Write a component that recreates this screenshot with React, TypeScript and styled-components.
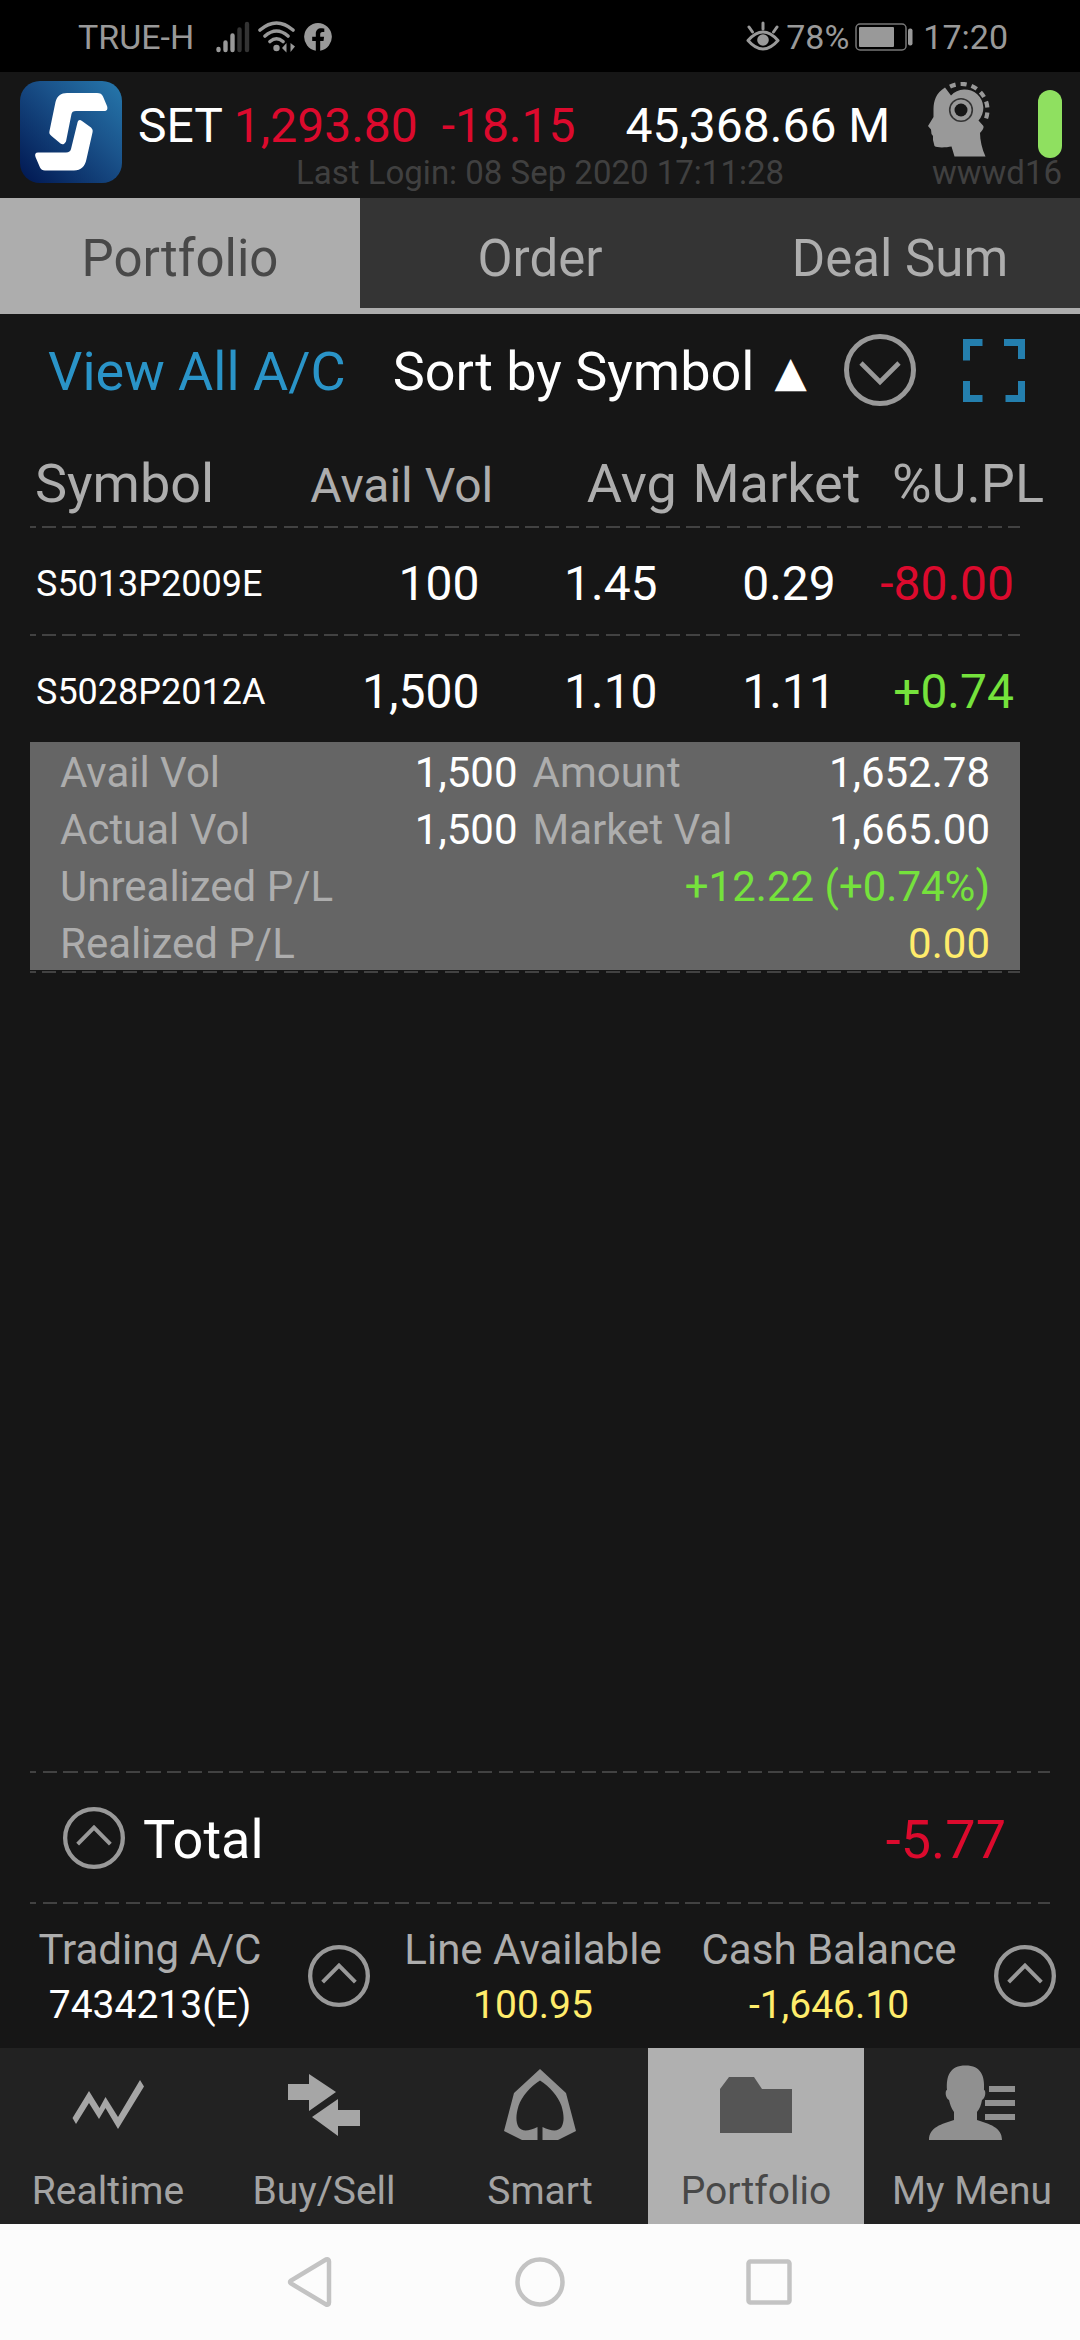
import React from "react";
import styled, { createGlobalStyle, css } from "styled-components";

const color = {
  bg: "#161616",
  tab: "#343434",
  nav: "#222222",
  panel: "#656565",
  label: "#adadad",
  icon: "#999999",
  dash: "#424242",
  red: "#dc0a2d",
  green: "#75e23c",
  yellow: "#ffec6b",
  blue: "#2a94c8",
};

const GlobalStyle = createGlobalStyle`
  *, *::before, *::after { box-sizing: border-box; }
  body { margin: 0; background: ${color.bg}; }
  body, button, table { font-family: Roboto, "Liberation Sans", sans-serif; }
  button { border: 0; padding: 0; margin: 0; background: none; color: inherit; cursor: pointer; }
  svg { display: block; flex: none; }
`;

const Screen = styled.div`
  display: flex;
  flex-direction: column;
  min-height: 100vh;
  color: #ffffff;
  white-space: nowrap;
`;

/* ---------- status bar ---------- */

const StatusBar = styled.div`
  display: flex;
  align-items: center;
  justify-content: space-between;
  height: 72px;
  padding: 0 72px 0 78px;
  background: #000000;
  color: ${color.icon};
  font-size: 34px;
  line-height: 40px;
`;

const StatusGroup = styled.div<{ $gap: number }>`
  display: flex;
  align-items: center;
  gap: ${(p) => p.$gap}px;
  padding-top: 2px;
`;

const Carrier = styled.span`
  margin-right: 14px;
`;

const Clock = styled.span`
  margin-left: 4px;
`;

/* ---------- header ---------- */

const Header = styled.header`
  display: flex;
  align-items: flex-start;
  height: 126px;
  padding: 9px 18px 0 20px;
`;

const HeaderBody = styled.div`
  flex: 1;
  padding-left: 16px;
`;

const QuoteRow = styled.div`
  display: flex;
  align-items: center;
  height: 76px;
  font-size: 48px;
  line-height: 56px;
`;

const Quote = styled.p`
  margin: 0;
  padding-right: 50px;
  padding-top: 14px;
  white-space: pre;
`;

const Turnover = styled.span`
  flex: 1;
  padding-top: 14px;
`;

const LightPill = styled.span`
  width: 24px;
  height: 68px;
  margin: 10px 0 0 48px;
  border-radius: 12px;
  background: #8fe060;
`;

const SessionRow = styled.div`
  display: flex;
  justify-content: space-between;
  padding-left: 158px;
  color: #404040;
  font-size: 33px;
  line-height: 32px;
`;

/* ---------- tabs ---------- */

const Tabs = styled.nav`
  display: grid;
  grid-template-columns: repeat(3, 1fr);
  height: 116px;
`;

const Tab = styled.button<{ $active?: boolean }>`
  border-bottom: 6px solid ${color.label};
  padding-top: 12px;
  background: ${(p) => (p.$active ? color.label : color.tab)};
  color: ${(p) => (p.$active ? "#484848" : color.label)};
  font-size: 51px;
  line-height: 60px;
`;

/* ---------- toolbar ---------- */

const Toolbar = styled.div`
  display: flex;
  align-items: center;
  gap: 47px;
  height: 112px;
  padding: 0 55px 0 48px;
  font-size: 54px;
  line-height: 64px;
`;

const ViewAll = styled.a`
  padding-top: 4px;
  color: ${color.blue};
  text-decoration: none;
`;

const SortGroup = styled.div`
  flex: 1;
  display: flex;
  align-items: center;
  justify-content: space-between;
`;

const SortButton = styled.button`
  display: flex;
  align-items: center;
  gap: 20px;
  padding-top: 4px;
  font-size: 54px;
  line-height: 64px;
`;

const SortArrow = styled.span`
  font-family: "DejaVu Sans", sans-serif;
  font-size: 42px;
  line-height: 42px;
`;

/* ---------- holdings table ---------- */

const dashes = css`
  background-image: repeating-linear-gradient(
    90deg,
    ${color.dash} 0 0.6%,
    transparent 0.6% 1.233%,
    ${color.dash} 1.233% 2.033%
  );
  background-repeat: no-repeat;
  background-size: 100% 2px;
`;

const Holdings = styled.main`
  flex: 1;
  padding: 0 30px;
`;

const HoldingsTable = styled.table`
  display: block;
  text-align: right;
`;

const Head = styled.thead`
  display: block;
`;

const Body = styled.tbody`
  display: block;
  margin-right: 30px;
`;

const Row = styled.tr`
  display: grid;
  grid-template-columns: 26fr 20fr 18fr 18fr 18fr;
  align-items: center;
  height: 106px;
`;

const HeadRow = styled(Row)`
  align-items: baseline;
  height: 100px;
`;

const HeadCell = styled.th<{ $small?: boolean }>`
  padding: 26px 6px 0 5px;
  color: ${color.label};
  font-weight: 400;
  font-size: ${(p) => (p.$small ? 48 : 54)}px;
  line-height: 64px;
  &:first-child {
    text-align: left;
  }
`;

const Rule = styled.tr`
  display: block;
  height: 2px;
  ${dashes}
`;

const HeadRule = styled(Rule)`
  margin-right: 30px;
`;

const EndRule = styled(Rule)`
  margin-top: 1px;
`;

const SymbolCell = styled.th`
  padding: 5px 6px 0;
  text-align: left;
  font-weight: 400;
  font-size: 36px;
  line-height: 56px;
`;

const Cell = styled.td<{ $tone?: string }>`
  padding: 5px 6px 0;
  color: ${(p) => p.$tone ?? "inherit"};
  font-size: 48px;
  line-height: 56px;
`;

const DetailRow = styled.tr`
  display: block;
`;

const DetailCell = styled.td`
  display: block;
  padding: 0 30px;
  background: ${color.panel};
`;

const DetailGrid = styled.dl`
  display: grid;
  grid-template-columns: 1fr 1fr;
  column-gap: 15px;
  margin: 0;
  font-size: 42px;
  line-height: 53px;
`;

const DetailItem = styled.div<{ $wide?: boolean }>`
  display: flex;
  justify-content: space-between;
  grid-column: ${(p) => (p.$wide ? "1 / -1" : "auto")};
  padding-top: 4px;
`;

const DetailLabel = styled.dt`
  color: ${color.label};
`;

const DetailValue = styled.dd<{ $tone?: string }>`
  margin: 0;
  color: ${(p) => p.$tone ?? "inherit"};
`;

/* ---------- totals and account ---------- */

const DashedLine = styled.div`
  height: 2px;
  margin: 0 30px;
  ${dashes}
`;

const TotalRow = styled.div`
  display: flex;
  align-items: center;
  height: 129px;
  padding: 0 74px 0 63px;
  font-size: 54px;
  line-height: 64px;
`;

const TotalLabel = styled.span`
  flex: 1;
  padding: 4px 0 0 18px;
`;

const TotalValue = styled.span`
  padding-top: 4px;
  color: ${color.red};
`;

const AccountRow = styled.div`
  display: grid;
  grid-template-columns: 300fr 78fr 310fr 282fr 110fr;
  align-items: center;
  justify-items: center;
  height: 144px;
`;

const AccountItem = styled.div`
  padding-top: 4px;
  text-align: center;
`;

const AccountLabel = styled.div`
  color: ${color.label};
  font-size: 42px;
  line-height: 54px;
`;

const AccountValue = styled.div<{ $tone?: string }>`
  color: ${(p) => p.$tone ?? "inherit"};
  font-size: 39px;
  line-height: 56px;
`;

/* ---------- bottom navigation ---------- */

const BottomNav = styled.nav`
  display: grid;
  grid-template-columns: repeat(5, 1fr);
  height: 176px;
`;

const NavItem = styled.button<{ $active?: boolean }>`
  display: flex;
  flex-direction: column;
  align-items: center;
  gap: 18px;
  padding-top: 14px;
  background: ${(p) => (p.$active ? "#b0b0b0" : color.nav)};
  color: ${(p) => (p.$active ? "#484848" : "#a3a3a3")};
  font-size: 39px;
  line-height: 46px;
`;

const SystemBar = styled.div`
  display: grid;
  grid-template-columns: 1fr 50px 1fr;
  align-items: center;
  height: 116px;
  background: #fcfcfc;
`;

const SystemButton = styled.button<{ $side?: "left" | "right" }>`
  justify-self: ${(p) => (p.$side === "left" ? "end" : "start")};
  margin-left: ${(p) => (p.$side === "right" ? 179 : 0)}px;
  margin-right: ${(p) => (p.$side === "left" ? 182 : 0)}px;
`;

/* ---------- drawings ---------- */

const SignalIcon = () => (
  <svg width="34" height="32" viewBox="0 0 34 32">
    <g stroke={color.icon} strokeWidth="4.4" strokeLinecap="round">
      <path d="M2.5 28V29M9.5 21.5V29M16.5 14.5V29" />
    </g>
    <path d="M23.5 8.5V29M31 3V29" stroke="#333333" strokeWidth="4.4" strokeLinecap="round" />
  </svg>
);

const WifiIcon = () => (
  <svg width="38" height="32" viewBox="0 0 38 32" fill="none" stroke={color.icon} strokeWidth="3.6" strokeLinecap="round">
    <path d="M2 9Q18.500 -5 35 9M7 15Q18.500 5 30 15M12 20.500Q18.500 15 25 20.500" />
    <circle cx="18.5" cy="27" r="3.2" fill={color.icon} stroke="none" />
    <path d="M24 27L28.500 22V31.500ZM37 25.500L32.500 31V22Z" fill={color.icon} stroke="none" />
  </svg>
);

const FacebookIcon = () => (
  <svg width="28" height="28" viewBox="0 0 28 28">
    <path
      d="M14 0A14 14 0 0 0 11.800 27.800V18H8.200V13.800H11.800V10.800C11.800 7.200 13.900 5.200 17.200 5.200C18.700 5.200 20.300 5.500 20.300 5.500V9H18.500C16.700 9 16.200 10.100 16.200 11.300V13.800H20.100L19.500 18H16.200V27.800A14 14 0 0 0 14 0Z"
      fill={color.icon}
    />
  </svg>
);

const EyeIcon = () => (
  <svg width="34" height="32" viewBox="0 0 34 32" fill="none" stroke={color.icon} strokeWidth="3" strokeLinecap="round">
    <path d="M2 19.500Q17 2.500 32 19.500Q17 36.500 2 19.500Z" strokeLinejoin="round" />
    <path d="M17 2V8M3 6L6.500 11M31 6L27.500 11" />
    <circle cx="17" cy="19" r="5.8" fill={color.icon} stroke="none" />
  </svg>
);

const BatteryIcon = () => (
  <svg width="58" height="28" viewBox="0 0 58 28">
    <rect x="1" y="1" width="50" height="26" rx="4" fill="none" stroke="#777777" strokeWidth="1.5" />
    <rect x="4" y="4" width="35" height="20" rx="1" fill={color.icon} />
    <rect x="53" y="5.5" width="4.5" height="17" rx="2" fill={color.icon} />
  </svg>
);

const Logo = () => (
  <svg width="102" height="102" viewBox="0 0 102 102" role="img" aria-label="Streaming">
    <defs>
      <linearGradient id="logoFill" x1="0" y1="1" x2="1" y2="0">
        <stop offset="0" stopColor="#001650" />
        <stop offset="0.6" stopColor="#1a528a" />
        <stop offset="1" stopColor="#2678ac" />
      </linearGradient>
    </defs>
    <rect width="102" height="102" rx="20" fill="url(#logoFill)" />
    <path
      d="M47 12H77C80 12 82 13 83 15.500L87 25C88 28 87 30 84 30H56C53 30 52 31 51.500 33L46 60.500C44 63.500 42.500 64 40.500 62.500L31.500 55C29.500 53.500 29 52 29.500 50L35.500 21C37 15 41 12 47 12ZM62 40L71 46.500C72.500 48 73 49.500 72.500 51.500L66.500 78C65 85.500 61 89.500 54 89.500H25C22.500 89.500 21 88.500 20 86.500L15.500 76C14.500 73 15.500 71.500 18 71.500H46C49 71.500 50.500 70 51 68L57.500 41.500C58.500 38.500 60 38.500 62 40Z"
      fill="#ffffff"
    />
  </svg>
);

const HeadIcon = () => (
  <svg width="62" height="75" viewBox="0 0 62 75">
    <path
      d="M17 5.500C8 11 5.500 19 5.500 27V35L0 44L3 47.500L3.500 52L5 54V58L6.500 64C9 66 18 65.500 23.500 64.500L26.500 74.500H57.500C54 67 52 58 52 51C55 48 56.500 45 55 43.500L50.500 38.500A18 18 0 0 0 23 13.500Z"
      fill={color.icon}
    />
    <circle cx="33" cy="28" r="11.3" fill="none" stroke="#333333" strokeWidth="1.6" />
    <circle cx="33" cy="28" r="6.5" fill={color.bg} />
    <path d="M22 4.600A26 26 0 0 1 57 39" fill="none" stroke={color.icon} strokeWidth="4.2" strokeDasharray="6 5" />
  </svg>
);

const CircleChevron = ({ size, up }: { size: number; up?: boolean }) => (
  <svg width={size} height={size} viewBox="0 0 72 72" fill="none" stroke={color.icon}>
    <circle cx="36" cy="36" r="33.5" strokeWidth="5" />
    <path d={up ? "M17 43L36 24L55 43" : "M17 29L36 48L55 29"} strokeWidth="4.6" />
  </svg>
);

const FullscreenIcon = () => (
  <svg width="62" height="63" viewBox="0 0 62 63" fill="none" stroke="#247fae" strokeWidth="7">
    <path d="M19.500 3.500H3.500V21.500M41 3.500H58.500V20M3.500 42V59.500H19.500M42.500 59.500H58.500V42" />
  </svg>
);

const navIcons = {
  realtime: (
    <path
      d="M8.500 56L25 29L35.500 46L41.500 35L54 55L76 18L80 24.500L54 67L41.500 46L35 57L25 41L12 62Z"
      fill="#a6a6a6"
    />
  ),
  trade: <path d="M8 22H29V12L56 30L29 49V38H8ZM32 55L58 37V48H80V64H58V74Z" fill="#a6a6a6" />,
  smart: (
    <path
      d="M44 7L70 31L80 69L62 78H46.500V65C55 69 62 70 65.500 65C68.500 60 68 52 65.500 44C62 34 54 25 44 18.500C34 25 26 34 22.500 44C20 52 19.500 60 22.500 65C26 70 33 69 41.500 65V78H26L8 69L18 31Z"
      fill="#909090"
    />
  ),
  portfolio: <path d="M8 27L17 15H42L50 27H80V71H8Z" fill="#555555" />,
  menu: (
    <path
      d="M1 78C1 65 14 62 26 58V50C23 46 22 42 21 38C17 36 17 28 19 28C18 14 22 3.500 37.500 3.500S57 14 56 28C58 28 58 36 54 38C53 43 52 46 49 50V58C61 62 74 65 74 78ZM61 24H87V30H61ZM57 38H87V44H57ZM57 52H87V58H57Z"
      fill="#909090"
    />
  ),
};

/* ---------- data ---------- */

type Holding = { symbol: string; vol: string; avg: string; market: string; pl: string; tone: string };

const holdings: Holding[] = [
  { symbol: "S5013P2009E", vol: "100", avg: "1.45", market: "0.29", pl: "-80.00", tone: color.red },
  { symbol: "S5028P2012A", vol: "1,500", avg: "1.10", market: "1.11", pl: "+0.74", tone: color.green },
];

const details = [
  { label: "Avail Vol", value: "1,500" },
  { label: "Amount", value: "1,652.78" },
  { label: "Actual Vol", value: "1,500" },
  { label: "Market Val", value: "1,665.00" },
  { label: "Unrealized P/L", value: "+12.22 (+0.74%)", tone: color.green, wide: true },
  { label: "Realized P/L", value: "0.00", tone: color.yellow, wide: true },
];

const navItems: { icon: keyof typeof navIcons; label: string }[] = [
  { icon: "realtime", label: "Realtime" },
  { icon: "trade", label: "Buy/Sell" },
  { icon: "smart", label: "Smart" },
  { icon: "portfolio", label: "Portfolio" },
  { icon: "menu", label: "My Menu" },
];

const HoldingRow = ({ item }: { item: Holding }) => (
  <Row>
    <SymbolCell scope="row">{item.symbol}</SymbolCell>
    <Cell>{item.vol}</Cell>
    <Cell>{item.avg}</Cell>
    <Cell>{item.market}</Cell>
    <Cell $tone={item.tone}>{item.pl}</Cell>
  </Row>
);

const Account = ({ label, value, tone }: { label: string; value: string; tone?: string }) => (
  <AccountItem>
    <AccountLabel>{label}</AccountLabel>
    <AccountValue $tone={tone}>{value}</AccountValue>
  </AccountItem>
);

const Red = styled.span`
  color: ${color.red};
`;

export default function App() {
  return (
    <Screen>
      <GlobalStyle />
      <StatusBar>
        <StatusGroup $gap={8}>
          <Carrier>TRUE-H</Carrier>
          <SignalIcon />
          <WifiIcon />
          <FacebookIcon />
        </StatusGroup>
        <StatusGroup $gap={6}>
          <EyeIcon />
          <span>78%</span>
          <BatteryIcon />
          <Clock>17:20</Clock>
        </StatusGroup>
      </StatusBar>

      <Header>
        <Logo />
        <HeaderBody>
          <QuoteRow>
            <Quote>
              SET <Red>1,293.80{"  "}-18.15</Red>
            </Quote>
            <Turnover>45,368.66 M</Turnover>
            <HeadIcon />
            <LightPill />
          </QuoteRow>
          <SessionRow>
            <span>Last Login: 08 Sep 2020 17:11:28</span>
            <span>wwwd16</span>
          </SessionRow>
        </HeaderBody>
      </Header>

      <Tabs>
        <Tab $active>Portfolio</Tab>
        <Tab>Order</Tab>
        <Tab>Deal Sum</Tab>
      </Tabs>

      <Toolbar>
        <ViewAll href="#all">View All A/C</ViewAll>
        <SortGroup>
          <SortButton>
            Sort by Symbol <SortArrow>▲</SortArrow>
          </SortButton>
          <button aria-label="Sort options">
            <CircleChevron size={72} />
          </button>
        </SortGroup>
        <button aria-label="Full screen">
          <FullscreenIcon />
        </button>
      </Toolbar>

      <Holdings>
        <HoldingsTable>
          <Head>
            <HeadRow>
              <HeadCell>Symbol</HeadCell>
              <HeadCell $small>Avail Vol</HeadCell>
              <HeadCell>Avg</HeadCell>
              <HeadCell>Market</HeadCell>
              <HeadCell>%U.PL</HeadCell>
            </HeadRow>
            <HeadRule aria-hidden />
          </Head>
          <Body>
            <HoldingRow item={holdings[0]} />
            <Rule aria-hidden />
            <HoldingRow item={holdings[1]} />
            <DetailRow>
              <DetailCell colSpan={5}>
                <DetailGrid>
                  {details.map((d) => (
                    <DetailItem key={d.label} $wide={d.wide}>
                      <DetailLabel>{d.label}</DetailLabel>
                      <DetailValue $tone={d.tone}>{d.value}</DetailValue>
                    </DetailItem>
                  ))}
                </DetailGrid>
              </DetailCell>
            </DetailRow>
            <EndRule aria-hidden />
          </Body>
        </HoldingsTable>
      </Holdings>

      <DashedLine />
      <TotalRow>
        <button aria-label="Expand total">
          <CircleChevron size={62} up />
        </button>
        <TotalLabel>Total</TotalLabel>
        <TotalValue>-5.77</TotalValue>
      </TotalRow>
      <DashedLine />

      <AccountRow>
        <Account label="Trading A/C" value="7434213(E)" />
        <button aria-label="Choose account">
          <CircleChevron size={62} up />
        </button>
        <Account label="Line Available" value="100.95" tone={color.yellow} />
        <Account label="Cash Balance" value="-1,646.10" tone={color.yellow} />
        <button aria-label="Expand balance">
          <CircleChevron size={62} up />
        </button>
      </AccountRow>

      <BottomNav>
        {navItems.map((n) => (
          <NavItem key={n.icon} $active={n.icon === "portfolio"}>
            <svg width="88" height="88" viewBox="0 0 88 88">
              {navIcons[n.icon]}
            </svg>
            {n.label}
          </NavItem>
        ))}
      </BottomNav>

      <SystemBar>
        <SystemButton $side="left" aria-label="Back">
          <svg width="46" height="52" viewBox="0 0 46 52" fill="none" stroke="#c3c3c3" strokeWidth="4.5">
            <path d="M39 3.500L4 24.500Q2 26 4 27.500L39 48.500Q42 49.500 42 46.500V5.500Q42 2.500 39 3.500Z" />
          </svg>
        </SystemButton>
        <SystemButton aria-label="Home">
          <svg width="50" height="50" viewBox="0 0 50 50" fill="none" stroke="#c3c3c3" strokeWidth="4.5">
            <circle cx="25" cy="25" r="22.5" />
          </svg>
        </SystemButton>
        <SystemButton $side="right" aria-label="Recent apps">
          <svg width="50" height="50" viewBox="0 0 50 50" fill="none" stroke="#c3c3c3" strokeWidth="4.5">
            <rect x="4.5" y="4.5" width="41" height="41" rx="2" />
          </svg>
        </SystemButton>
      </SystemBar>
    </Screen>
  );
}
